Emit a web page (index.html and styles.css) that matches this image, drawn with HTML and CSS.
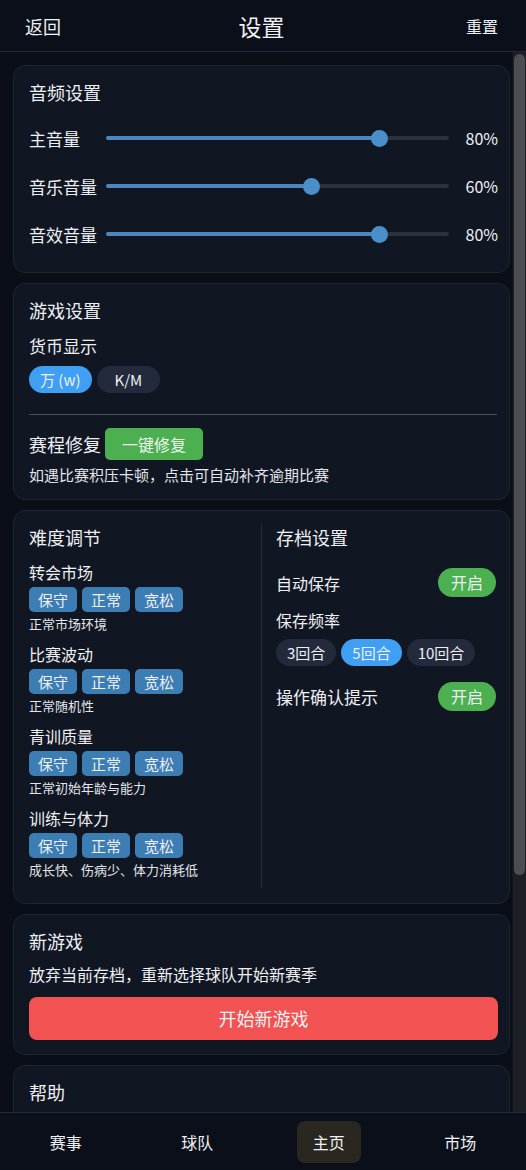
FILE: index.html
```html
<!DOCTYPE html>
<html lang="zh-CN">

<head>
    <meta charset="UTF-8">
    <meta name="viewport" content="width=device-width, initial-scale=1.0">
    <title>设置</title>
    <link rel="stylesheet" href="styles.css">
</head>

<body>
    <header class="top-bar">
        <span class="top-link">返回</span>
        <h1>设置</h1>
        <span class="top-link small">重置</span>
    </header>

    <div class="content-wrap">
        <main class="scroll-area">
            <section class="card">
                <h2>音频设置</h2>
                <div class="slider-row">
                    <span class="slider-label">主音量</span>
                    <div class="track"><div class="fill" style="width: 80%"><span class="knob"></span></div></div>
                    <span class="slider-value">80%</span>
                </div>
                <div class="slider-row">
                    <span class="slider-label">音乐音量</span>
                    <div class="track"><div class="fill" style="width: 60%"><span class="knob"></span></div></div>
                    <span class="slider-value">60%</span>
                </div>
                <div class="slider-row">
                    <span class="slider-label">音效音量</span>
                    <div class="track"><div class="fill" style="width: 80%"><span class="knob"></span></div></div>
                    <span class="slider-value">80%</span>
                </div>
            </section>

            <section class="card">
                <h2>游戏设置</h2>
                <div class="field-label">货币显示</div>
                <div class="pill-group">
                    <span class="pill active">万 (w)</span>
                    <span class="pill wide">K/M</span>
                </div>
                <hr class="divider">
                <div class="repair-row">
                    <span class="repair-title">赛程修复</span>
                    <span class="green-btn">一键修复</span>
                </div>
                <p class="hint">如遇比赛积压卡顿，点击可自动补齐逾期比赛</p>
            </section>

            <section class="card split">
                <div class="col left">
                    <h2>难度调节</h2>
                    <div class="diff-group">
                        <div class="diff-label">转会市场</div>
                        <div class="diff-btns"><span>保守</span><span>正常</span><span>宽松</span></div>
                        <div class="diff-desc">正常市场环境</div>
                    </div>
                    <div class="diff-group">
                        <div class="diff-label">比赛波动</div>
                        <div class="diff-btns"><span>保守</span><span>正常</span><span>宽松</span></div>
                        <div class="diff-desc">正常随机性</div>
                    </div>
                    <div class="diff-group">
                        <div class="diff-label">青训质量</div>
                        <div class="diff-btns"><span>保守</span><span>正常</span><span>宽松</span></div>
                        <div class="diff-desc">正常初始年龄与能力</div>
                    </div>
                    <div class="diff-group">
                        <div class="diff-label">训练与体力</div>
                        <div class="diff-btns"><span>保守</span><span>正常</span><span>宽松</span></div>
                        <div class="diff-desc">成长快、伤病少、体力消耗低</div>
                    </div>
                </div>
                <div class="col right">
                    <h2>存档设置</h2>
                    <div class="toggle-row first">
                        <span>自动保存</span>
                        <span class="toggle">开启</span>
                    </div>
                    <div class="field-label">保存频率</div>
                    <div class="pill-group">
                        <span class="pill">3回合</span>
                        <span class="pill active">5回合</span>
                        <span class="pill">10回合</span>
                    </div>
                    <div class="toggle-row">
                        <span>操作确认提示</span>
                        <span class="toggle">开启</span>
                    </div>
                </div>
            </section>

            <section class="card">
                <h2>新游戏</h2>
                <p class="new-desc">放弃当前存档，重新选择球队开始新赛季</p>
                <div class="red-btn">开始新游戏</div>
            </section>

            <section class="card help">
                <h2>帮助</h2>
            </section>
        </main>
        <div class="scrollbar"><div class="thumb"></div></div>
    </div>

    <nav class="bottom-nav">
        <span class="nav-item">赛事</span>
        <span class="nav-item">球队</span>
        <span class="nav-item"><b class="current">主页</b></span>
        <span class="nav-item">市场</span>
    </nav>
</body>

</html>
```

FILE: styles.css
```css
* {
    box-sizing: border-box;
}

body {
    font-family: 'Noto Sans CJK SC', 'Noto Sans', sans-serif;
    background-color: #0a0e17;
    color: #eef0f3;
    margin: 0;
    padding: 0;
    height: 100vh;
    display: flex;
    flex-direction: column;
    overflow: hidden;
}

h1,
h2,
p {
    margin: 0;
    font-weight: 400;
}

.top-bar {
    height: 52px;
    flex: none;
    display: grid;
    grid-template-columns: 1fr auto 1fr;
    align-items: center;
    padding: 0 28px 0 25px;
    background-color: #0b0f19;
    border-bottom: 1px solid #232833;
}

.top-bar h1 {
    font-size: 23px;
    line-height: 30px;
}

.top-link {
    font-size: 18px;
    line-height: 26px;
}

.top-link.small {
    font-size: 16px;
    text-align: right;
}

.content-wrap {
    flex: 1;
    min-height: 0;
    display: flex;
}

.scroll-area {
    flex: 1;
    overflow: hidden;
    padding: 13px 2px 0 13px;
    background-color: #0a0e17;
}

.scrollbar {
    width: 14px;
    flex: none;
    padding: 2px 1px 0 1px;
    background-color: #1c1f26;
    border-left: 1px solid #121419;
}

.thumb {
    height: 821px;
    border-radius: 6px;
    background-color: #4b4d53;
}

.card {
    background-color: #111623;
    border: 1px solid #1e2431;
    border-radius: 12px;
    padding: 13px 11px 14px 15px;
    margin-bottom: 10px;
}

.card h2 {
    font-size: 18px;
    line-height: 26px;
}

/* audio */
.slider-row {
    height: 48px;
    display: grid;
    grid-template-columns: 70px 1fr 42px;
    column-gap: 7px;
    align-items: center;
}

.card h2 + .slider-row {
    margin-top: 9px;
}

.slider-label {
    font-size: 17px;
    white-space: nowrap;
}

.slider-value {
    font-size: 16px;
    text-align: right;
}

.track {
    height: 4px;
    border-radius: 2px;
    background-color: #2c313d;
}

.fill {
    height: 4px;
    border-radius: 2px;
    background-color: #4a86bf;
    position: relative;
}

.knob {
    position: absolute;
    right: -8px;
    top: -6px;
    width: 17px;
    height: 17px;
    border-radius: 50%;
    background-color: #4a8fcc;
}

/* game */
.field-label {
    font-size: 17px;
    line-height: 24px;
    margin-top: 11px;
}

.pill-group {
    display: flex;
    gap: 5px;
    margin-top: 8px;
}

.pill {
    height: 27px;
    line-height: 27px;
    padding: 0 11px;
    border-radius: 14px;
    font-size: 15px;
    background-color: #232a3c;
}

.pill.wide {
    padding: 0 18px;
}

.pill.active {
    background-color: #3f9ff3;
}

.divider {
    border: none;
    border-top: 1px solid #4a4f59;
    margin: 21px 1px 13px 0;
}

.repair-row {
    display: flex;
    align-items: center;
}

.repair-title {
    font-size: 18px;
    width: 76px;
    white-space: nowrap;
}

.green-btn {
    background-color: #4caf50;
    color: #eef6ee;
    font-size: 16px;
    height: 32px;
    line-height: 32px;
    padding: 0 17px;
    border-radius: 5px;
}

.hint {
    font-size: 15px;
    line-height: 20px;
    margin-top: 5px;
    color: #e2e5ea;
}

/* difficulty + save */
.card.split {
    display: grid;
    grid-template-columns: 233px 1fr;
    padding-bottom: 15px;
}

.col.left {
    border-right: 1px solid #252b37;
    padding-bottom: 10px;
}

.col.right {
    padding-left: 14px;
    padding-right: 2px;
}

.diff-group {
    margin-top: 11px;
}

.diff-label {
    font-size: 16px;
    line-height: 22px;
}

.diff-btns {
    display: flex;
    gap: 5px;
    margin-top: 4px;
}

.diff-btns span {
    width: 48px;
    height: 25px;
    line-height: 25px;
    text-align: center;
    font-size: 15px;
    border-radius: 5px;
    background-color: #3c7db4;
}

.diff-desc {
    font-size: 13px;
    line-height: 16px;
    margin-top: 4px;
    color: #e2e5ea;
}

.toggle-row {
    display: flex;
    justify-content: space-between;
    align-items: center;
    font-size: 17px;
    margin-top: 16px;
}

.toggle-row.first {
    margin-top: 18px;
    font-size: 16px;
}

.col.right .field-label {
    margin-top: 12px;
    line-height: 22px;
    font-size: 16px;
}

.toggle {
    width: 58px;
    height: 29px;
    line-height: 29px;
    text-align: center;
    border-radius: 15px;
    background-color: #4caf50;
    font-size: 16px;
}

/* new game */
.new-desc {
    font-size: 16px;
    line-height: 22px;
    margin-top: 9px;
}

.red-btn {
    margin-top: 12px;
    height: 43px;
    line-height: 43px;
    text-align: center;
    font-size: 18px;
    border-radius: 8px;
    background-color: #f25252;
}

.card.help {
    min-height: 120px;
}

/* bottom nav */
.bottom-nav {
    height: 58px;
    flex: none;
    display: grid;
    grid-template-columns: repeat(4, 1fr);
    align-items: center;
    background-color: #0b0f19;
    border-top: 1px solid #252a35;
}

.nav-item {
    text-align: center;
    font-size: 16px;
}

.current {
    display: inline-block;
    font-weight: 400;
    width: 64px;
    height: 42px;
    line-height: 42px;
    border-radius: 8px;
    background-color: #2a2620;
}
```
